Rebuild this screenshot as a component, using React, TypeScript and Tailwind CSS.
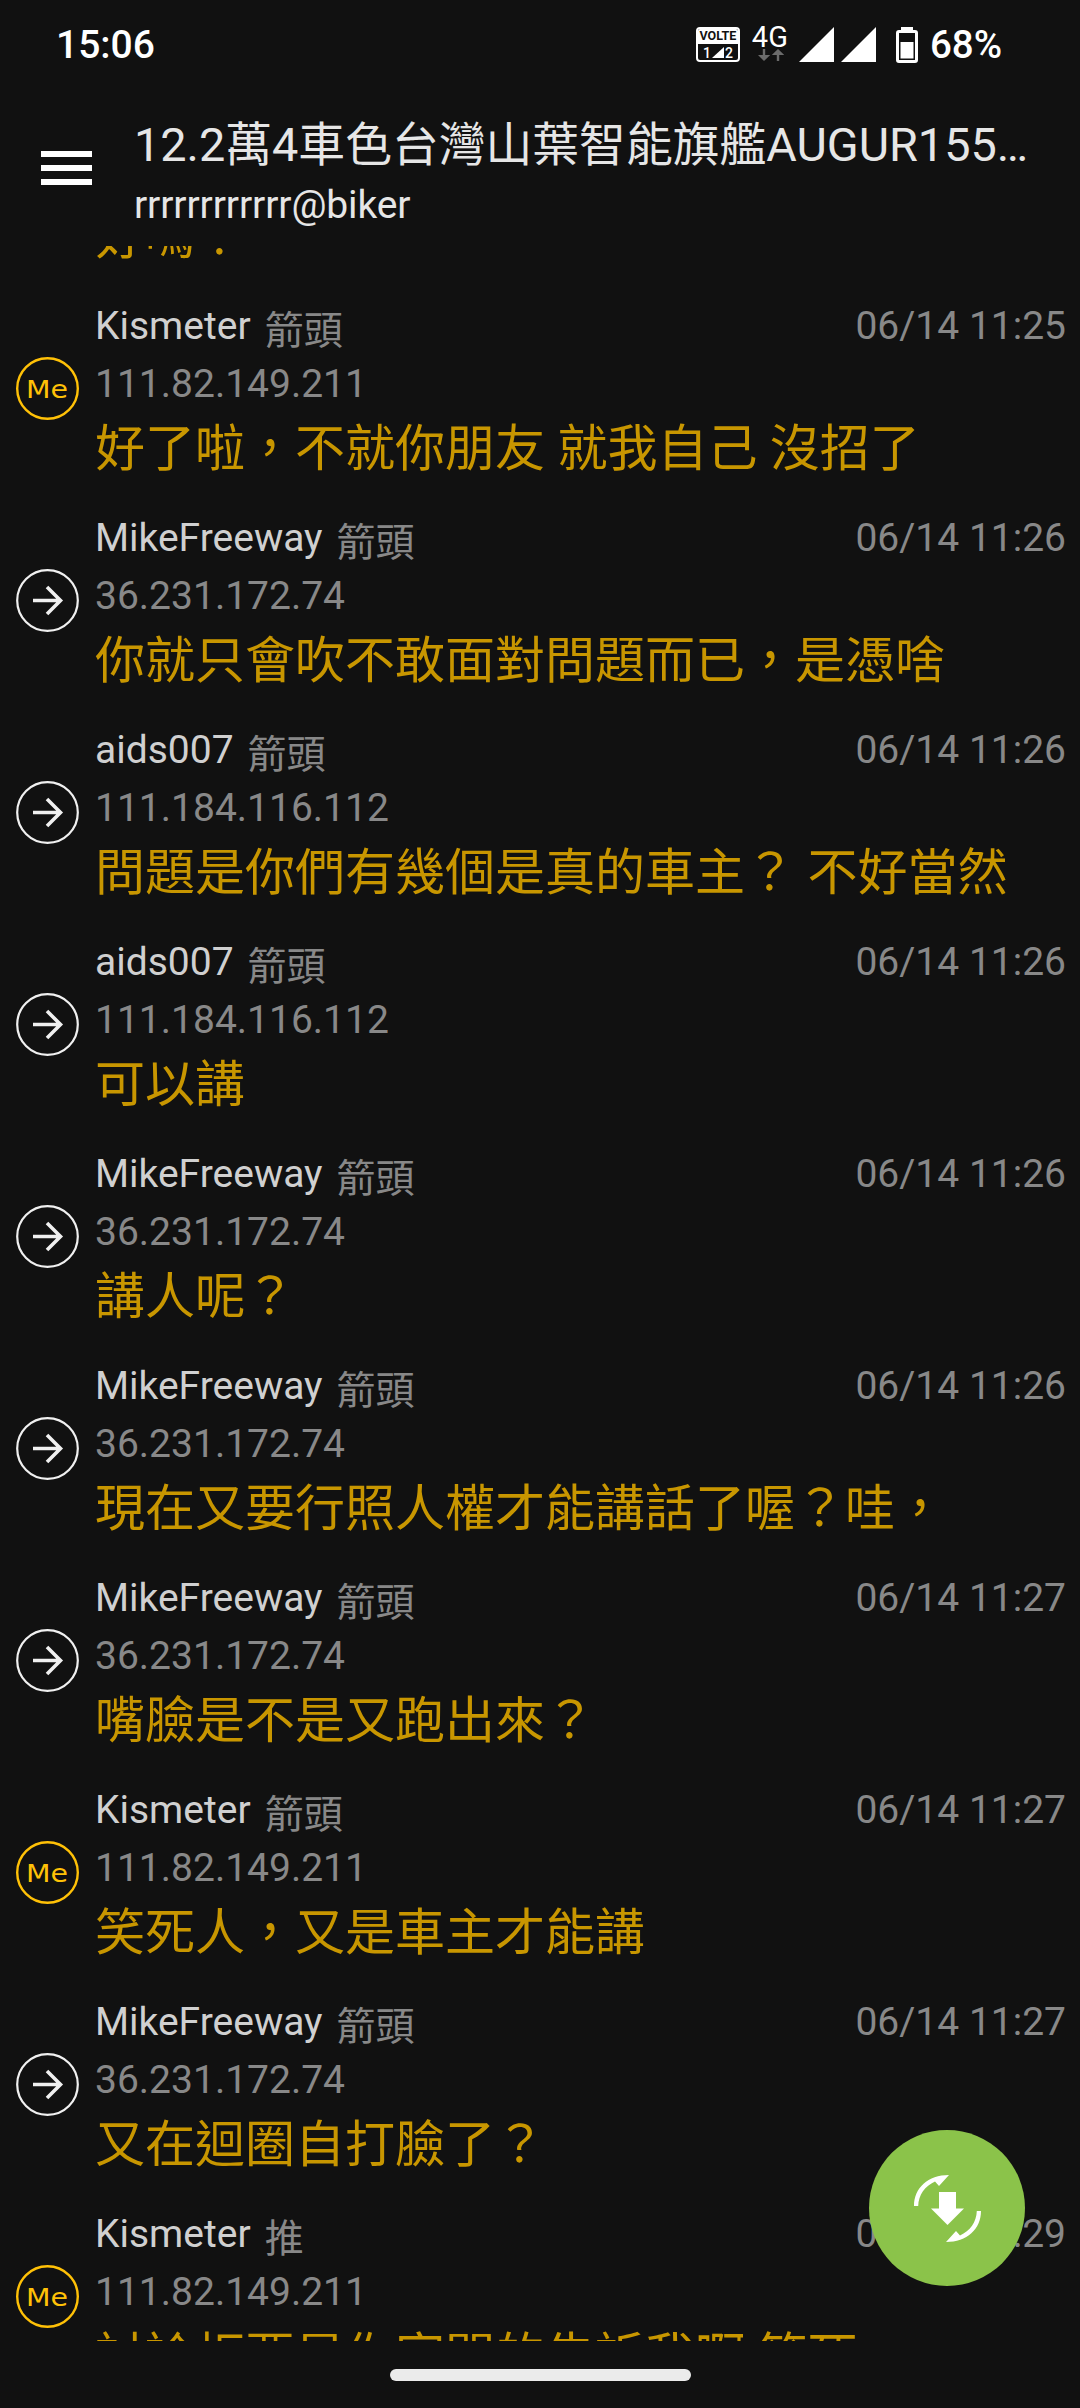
type Push = {
  user: string;
  tag: string;
  ip: string;
  text: string;
  time: string;
};

const pushes: Push[] = [
  { user: 'Kismeter', tag: '箭頭', ip: '111.82.149.211', text: '好嗎？', time: '06/14 11:25' },
  { user: 'Kismeter', tag: '箭頭', ip: '111.82.149.211', text: '好了啦，不就你朋友 就我自己 沒招了', time: '06/14 11:25' },
  { user: 'MikeFreeway', tag: '箭頭', ip: '36.231.172.74', text: '你就只會吹不敢面對問題而已，是憑啥', time: '06/14 11:26' },
  { user: 'aids007', tag: '箭頭', ip: '111.184.116.112', text: '問題是你們有幾個是真的車主？ 不好當然', time: '06/14 11:26' },
  { user: 'aids007', tag: '箭頭', ip: '111.184.116.112', text: '可以講', time: '06/14 11:26' },
  { user: 'MikeFreeway', tag: '箭頭', ip: '36.231.172.74', text: '講人呢？', time: '06/14 11:26' },
  { user: 'MikeFreeway', tag: '箭頭', ip: '36.231.172.74', text: '現在又要行照人權才能講話了喔？哇，', time: '06/14 11:26' },
  { user: 'MikeFreeway', tag: '箭頭', ip: '36.231.172.74', text: '嘴臉是不是又跑出來？', time: '06/14 11:27' },
  { user: 'Kismeter', tag: '箭頭', ip: '111.82.149.211', text: '笑死人，又是車主才能講', time: '06/14 11:27' },
  { user: 'MikeFreeway', tag: '箭頭', ip: '36.231.172.74', text: '又在迴圈自打臉了？', time: '06/14 11:27' },
  { user: 'Kismeter', tag: '推', ip: '111.82.149.211', text: '討論板要是你家開的告訴我啊 笑死', time: '06/14 11:29' },
];

function MeBadge() {
  return (
    <svg className="size-[63px]" viewBox="0 0 63 63">
      <circle cx="31.5" cy="31.5" r="30.3" fill="none" stroke="#ffc107" strokeWidth="2.4" />
      <text x="10" y="40.5" textLength="42" lengthAdjust="spacingAndGlyphs" fill="#ffc107" className="font-['DejaVu_Sans'] text-[25px]">
        Me
      </text>
    </svg>
  );
}

function ArrowBadge() {
  return (
    <svg className="size-[63px]" viewBox="0 0 63 63" fill="none" stroke="#f0f0f0">
      <circle cx="31.5" cy="31.5" r="30.3" strokeWidth="2.2" />
      <path d="M17 31.5H44.5M31 18L44.500 31.5L31 45" strokeWidth="3.6" />
    </svg>
  );
}

function PushRow({ push }: { push: Push }) {
  return (
    <li className="flex h-[212px] pl-[16px] pr-[14px]">
      <div className="w-[79px] shrink-0 pt-[67px]">
        {push.user === 'Kismeter' ? <MeBadge /> : <ArrowBadge />}
      </div>
      <div className="min-w-0 flex-1">
        <div className="flex h-[49px] items-start pt-[13px] text-[39px] leading-[46px]">
          <span className="text-[#d0d0d0]">{push.user}</span>
          <span className="ml-[14px] mt-[5px] text-[#888888]">{push.tag}</span>
          <span className="ml-auto text-[#888888]">{push.time}</span>
        </div>
        <div className="mt-[22px] text-[39px] leading-[46px] text-[#888888]">{push.ip}</div>
        <div className="mt-[5px] whitespace-nowrap text-[50px] leading-[74px] text-[#c89600]">{push.text}</div>
      </div>
    </li>
  );
}

function VolteIcon() {
  return (
    <div className="flex h-[35px] w-[44px] flex-col overflow-hidden rounded-[4px] border-2 border-white">
      <div className="flex h-[15px] items-center justify-center bg-white text-[12.5px] font-bold leading-none text-[#111111]">VOLTE</div>
      <div className="flex flex-1 items-center justify-center pt-px text-[14px] font-medium leading-none text-white">
        <span>1</span>
        <svg className="mx-[1px] h-[11px] w-[12px]" viewBox="0 0 12 11"><path d="M0 11H12V0Z" fill="#fff" /></svg>
        <span>2</span>
      </div>
    </div>
  );
}

function StatusBar() {
  return (
    <div className="flex h-[90px] items-start pl-[56px] pr-[78px] pt-[27px] text-white">
      <span className="mt-[-5px] text-[39px] font-medium leading-[46px]">15:06</span>
      <div className="ml-auto flex items-start">
        <VolteIcon />
        <div className="ml-[11px] flex h-[36px] w-[38px] flex-col items-center">
          <span className="mt-[-2px] text-[29px] leading-[24px]">4G</span>
          <svg className="ml-[3px] h-[12px] w-[26px]" viewBox="0 0 26 12" fill="#6b6b6b">
            <path d="M4.8 0h2.4v6h5L6 12 0 6h4.8zM18.8 12h2.4V6h5L20 0l-6.200 6h5z" />
          </svg>
        </div>
        <svg className="ml-[10px] h-[35px] w-[77px]" viewBox="0 0 77 35" fill="#fff">
          <path d="M0 35H35V0ZM42 35H77V0Z" />
        </svg>
        <svg className="ml-[20px] h-[36px] w-[22px]" viewBox="0 0 22 36">
          <rect x="5" y="0" width="12" height="4" fill="#fff" />
          <rect x="1.5" y="4.5" width="19" height="30" rx="1.5" fill="none" stroke="#fff" strokeWidth="3" />
          <rect x="4.500" y="15" width="13" height="16.500" fill="#fff" />
        </svg>
        <span className="ml-[12px] mt-[-5px] text-[38.5px] font-medium leading-[46px]">68%</span>
      </div>
    </div>
  );
}

function Header() {
  return (
    <header className="flex h-[156px] pl-[41px]">
      <button aria-label="menu" className="mt-[60.5px] flex h-[34px] w-[51px] flex-col justify-between">
        <span className="h-[6px] w-full bg-white" />
        <span className="h-[6px] w-full bg-white" />
        <span className="h-[6px] w-full bg-white" />
      </button>
      <div className="ml-[42px] w-[900px] pt-[20px] text-[#e6e6e6]">
        <h1 className="whitespace-nowrap text-[46.8px] font-normal leading-[70px]">12.2萬4車色台灣山葉智能旗艦AUGUR155…</h1>
        <p className="mt-[2px] text-[39px] leading-[46px] tracking-[-0.1px]">rrrrrrrrrrrr@biker</p>
      </div>
    </header>
  );
}

function LoadButton() {
  return (
    <button aria-label="load newer" className="absolute left-[869px] top-[2130px] flex size-[156px] items-center justify-center rounded-full bg-[#8bc34a]">
      <svg className="size-[156px]" viewBox="0 0 156 156" fill="#fff">
        <path d="M45 76C45 58 59 45 80 45L70 56L66 51.500C56 56 49.500 65 49.200 76Z" />
        <path d="M112 81C112 99 98 112 77 112L87 101L91 105.500C101 101 107.500 92 107.800 81Z" />
        <path d="M70 62H87V78.500H95L78.500 95L62 78.500H70Z" />
      </svg>
    </button>
  );
}

export default function App() {
  return (
    <main lang="zh-Hant-TW" className="relative h-[2408px] w-[1080px] overflow-hidden bg-[#111111] font-['Roboto','Noto_Sans_CJK_TC',sans-serif]">
      <StatusBar />
      <Header />
      <ul className="h-[2095px] overflow-hidden">
        <li className="-mt-[168px]">
          <ul>
            {pushes.map((push, i) => (
              <PushRow key={i} push={push} />
            ))}
          </ul>
        </li>
      </ul>
      <div className="mx-auto mt-[28px] h-[12px] w-[301px] rounded-full bg-[#ebebeb]" />
      <LoadButton />
    </main>
  );
}
